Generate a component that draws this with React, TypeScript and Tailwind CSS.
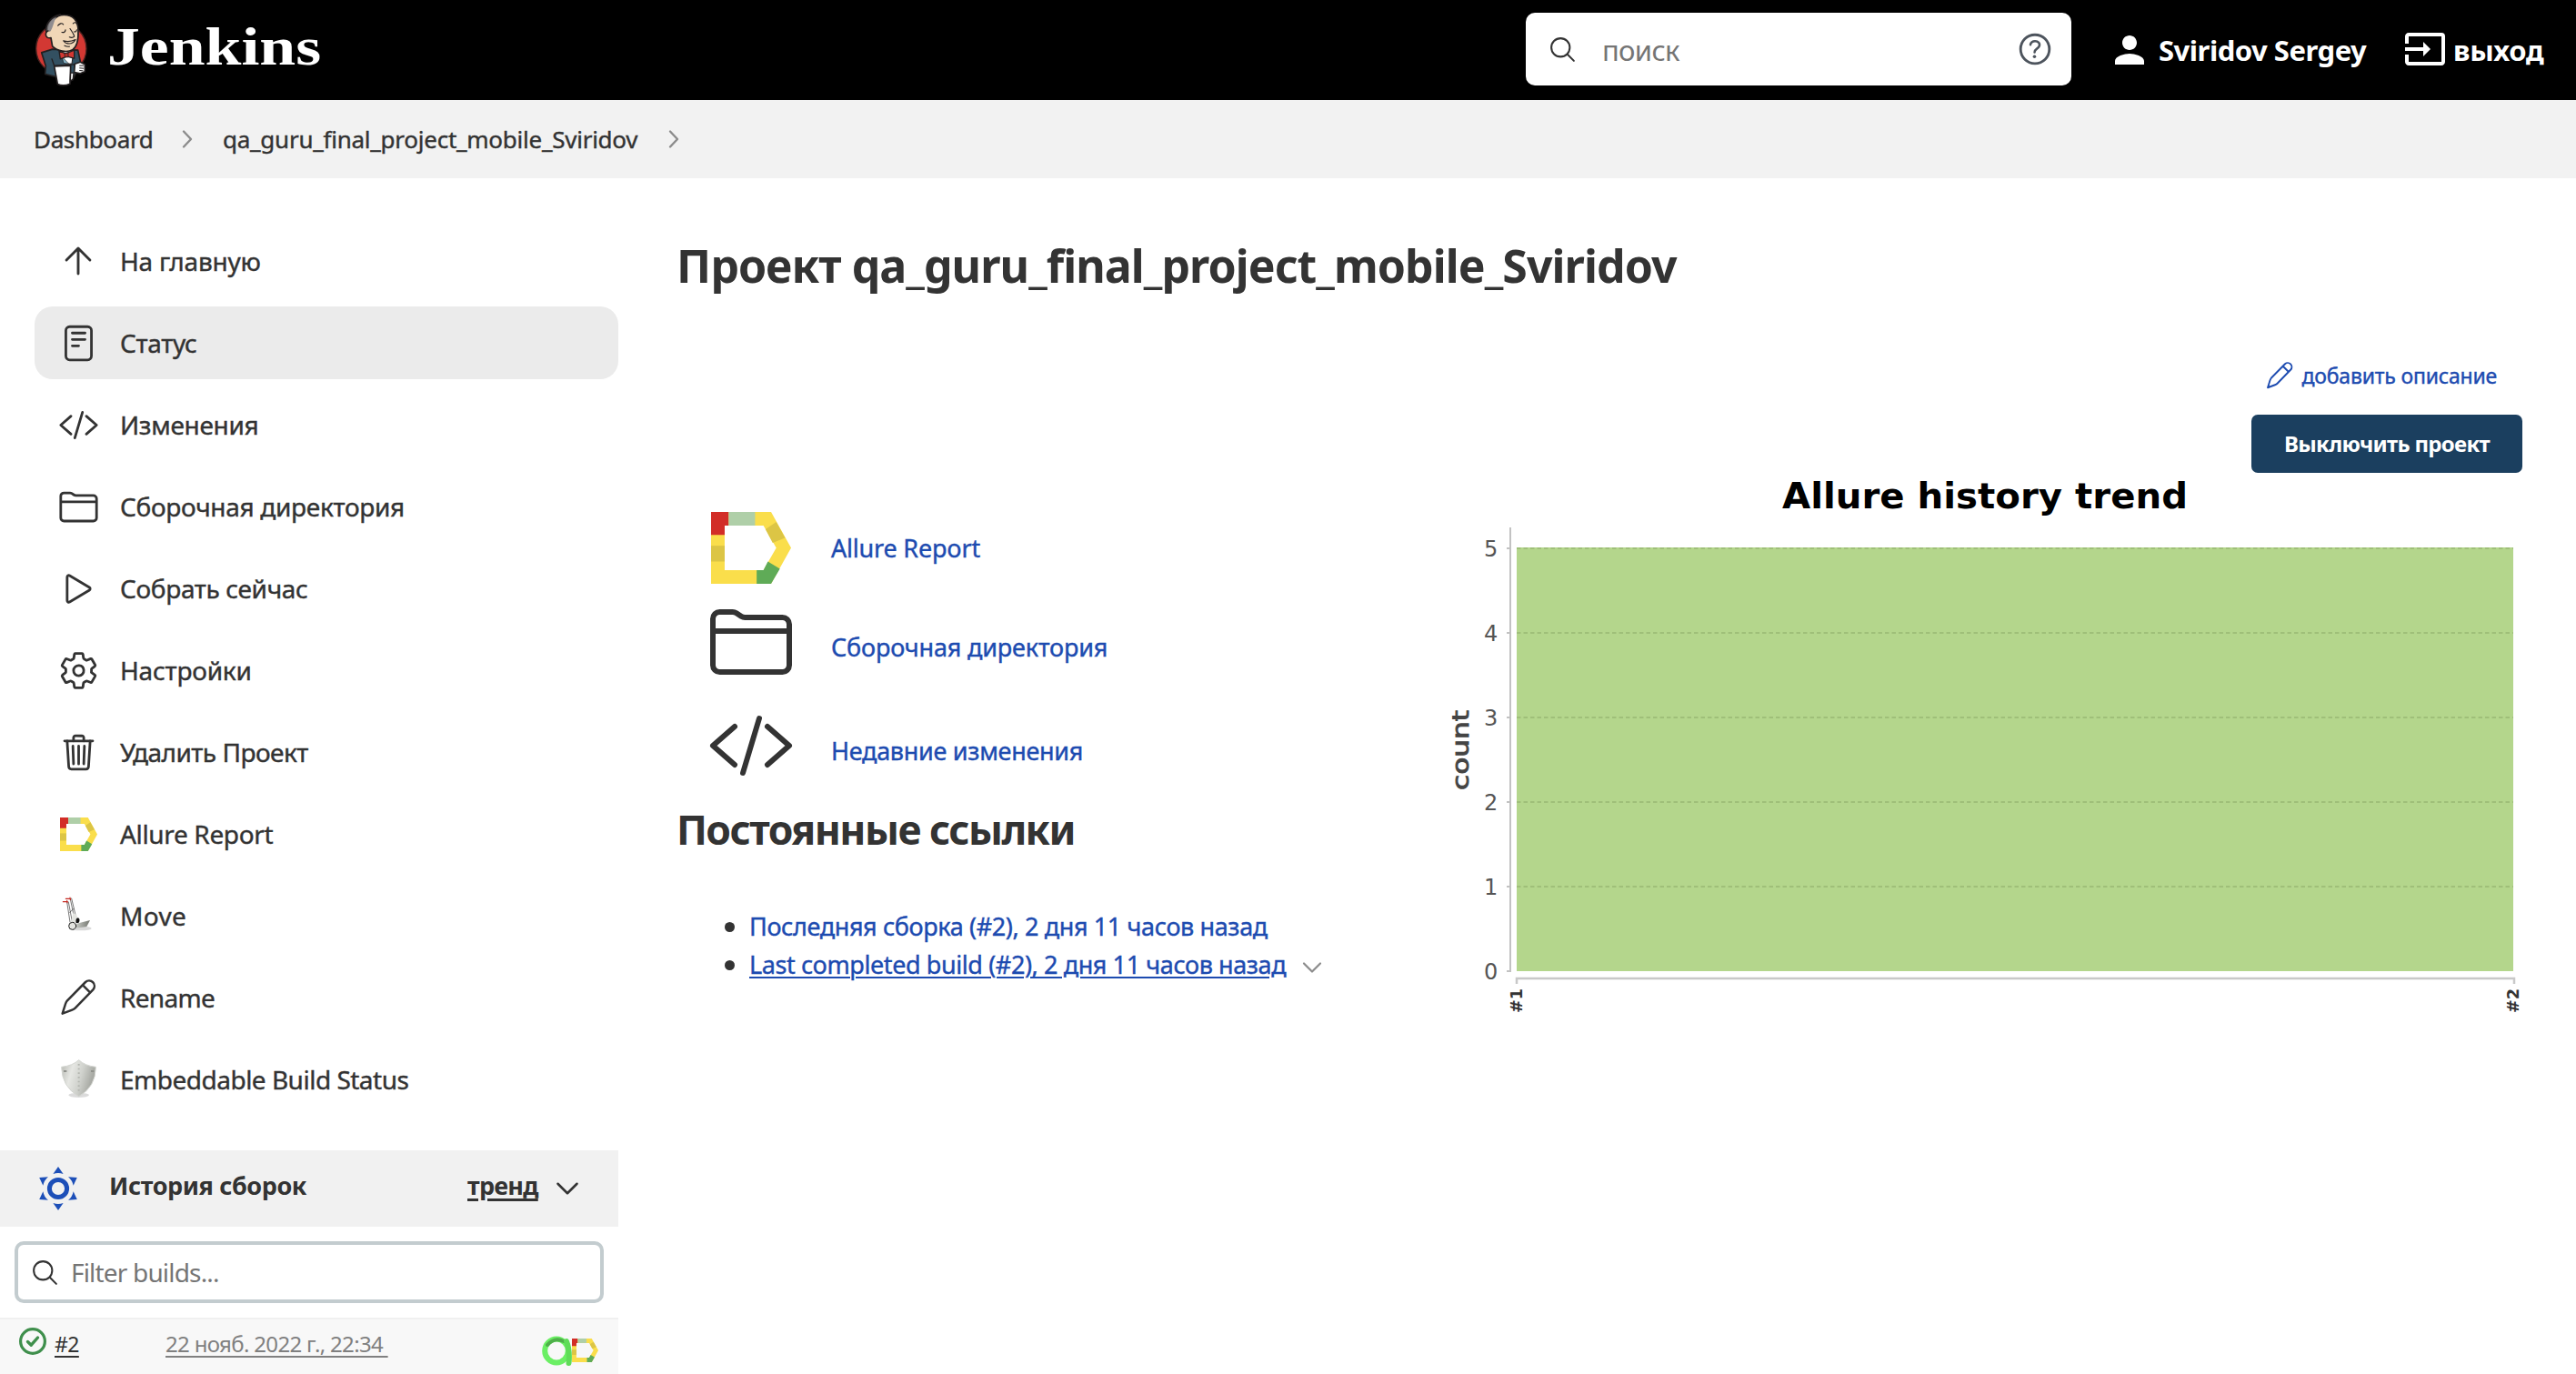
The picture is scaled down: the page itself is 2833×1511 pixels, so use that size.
import React from "react";
import {
  IoCodeSlashOutline,
  IoFolderOutline,
  IoHelpCircleOutline,
  IoPlayOutline,
  IoReaderOutline,
  IoSearchOutline,
  IoSettingsOutline,
  IoTrashOutline,
} from "react-icons/io5";
import { MdInput, MdPerson } from "react-icons/md";

type SvgProps = { className?: string };

function Butler({ className }: SvgProps) {
  return (
    <svg viewBox="50 40 180 245" className={className} fill="none" stroke="#231f20" strokeLinejoin="round" strokeLinecap="round">
      <ellipse cx="141" cy="158" rx="83" ry="84" fill="#d33833" strokeWidth="4" stroke="#4a2320" />
      <path d="M76 171 L112 160 L196 163 L205 205 L190 238 L178 262 L120 250 L88 242 L90 215 Z" fill="#335061" strokeWidth="5" />
      <path d="M136 165 L182 163 L176 208 L156 208 Z" fill="#fff" strokeWidth="3" />
      <path d="M143 184 L166 208 L150 206 Z" fill="#81b0c4" strokeWidth="2" />
      <path d="M92 108 C86 78 106 52 138 46 L118 96 Z" fill="#6d6b6d" strokeWidth="5" />
      <path d="M112 150 L107 122 C86 128 84 98 104 98 C106 66 124 47 150 47 C180 47 196 66 197 98 C198 126 196 150 178 162 C160 172 128 166 112 150 Z" fill="#f0d6b7" strokeWidth="5" />
      <path d="M106 100 C116 84 116 66 126 54 C108 60 97 78 98 98 Z" fill="#8f8c8f" stroke="none" />
      <path d="M130 82 Q140 70 148 78 M180 75 Q188 68 192 76 M143 104 Q154 106 155 96 M184 102 Q190 104 192 96 M170 92 Q184 112 184 118 Q178 124 168 120 M148 132 Q168 138 188 128 Q180 144 162 141 Q154 140 150 134 M152 148 Q160 152 168 151" strokeWidth="3.5" />
      <path d="M134 166 L156 174 L184 163 L184 190 L160 184 L138 192 Z" fill="#d33833" strokeWidth="4" />
      <path d="M153 173 L164 172 L164 186 L154 186 Z" fill="#b52b27" strokeWidth="2.5" />
      <path d="M118 216 L172 214 L170 274 Q148 284 129 275 Z" fill="#fff" strokeWidth="5" />
      <path d="M172 238 L182 238 L180 258 L171 266 Z" fill="#fff" strokeWidth="4" />
      <path d="M110 192 L118 214 L186 210" strokeWidth="4" />
      <path d="M186 208 L204 202 L219 210 L219 234 L204 240 L184 236 Z" fill="#fff" strokeWidth="5" />
      <path d="M202 214 L214 214 M202 222 L214 223 M202 230 L212 231" strokeWidth="3" />
    </svg>
  );
}

function ArrowUp() {
  return (
    <svg viewBox="0 0 512 512" className="size-[46px]" fill="none" stroke="currentColor" strokeWidth="32" strokeLinecap="round" strokeLinejoin="round">
      <path d="M112 244l144-144 144 144M256 120v292" />
    </svg>
  );
}

function Pencil({ className }: SvgProps) {
  return (
    <svg viewBox="36 309 144 144" className={className} fill="none" stroke="currentColor" strokeWidth="7.5" strokeLinecap="round" strokeLinejoin="round">
      <path d="M56 434 L66 402 Q68 396 72 391 L132 330 A17.7 17.7 0 0 1 157 355 L98 416 Q94 420 88 422 Z M124 341 L147 364" />
    </svg>
  );
}

function AllureLogo({ className }: SvgProps) {
  return (
    <svg viewBox="0 0 100 100" preserveAspectRatio="none" className={className}>
      <path d="M0 0H75L100 50L75 100H0Z M17 19V81H65.5L81.5 50L65.5 19Z" fillRule="evenodd" fill="#fade4b" />
      <path d="M0 0H22V19H17V32H0Z" fill="#d22d27" />
      <path d="M22 0H55V19H22Z" fill="#afcfa8" />
      <path d="M0 47H17V69H0Z" fill="#dcc545" />
      <path d="M81.5 14L92.5 36L77 43L68 24Z" fill="#dcc545" />
      <path d="M57 81H65.5L71 69L86 79L75 100H57Z" fill="#5fab57" />
    </svg>
  );
}

function HandTruck() {
  return (
    <svg viewBox="36 39 144 144" className="size-12" fill="none" strokeLinecap="round" strokeLinejoin="round">
      <defs>
        <linearGradient id="truckPlate" x1="0" y1="0" x2="1" y2="0">
          <stop offset="0" stopColor="#c9cbc6" />
          <stop offset="1" stopColor="#73766f" />
        </linearGradient>
      </defs>
      <ellipse cx="116" cy="153" rx="36" ry="7" fill="#000" opacity=".15" />
      <path d="M82 56 L92 104 M86 54 L99 108 M71 66 L81 132 M76 66 L88 130 M80 100 L93 88" stroke="#333" strokeWidth="2" />
      <path d="M92 100 L104 110 L108 136 L84 132 Z" fill="#e4e5e1" />
      <path d="M101 136 Q98 118 108 118 Q116 124 110 134 Z" fill="#111" />
      <path d="M100 138 L147 126 L136 147 L100 152 Z" fill="url(#truckPlate)" />
      <path d="M67 55 H83 M58 65 H73" stroke="#c42a22" strokeWidth="3.5" />
      <path d="M81 51 L82 59 M71 61 L72 69" stroke="#c42a22" strokeWidth="3" />
      <circle cx="89" cy="145" r="12" fill="#e4e4e0" stroke="#1d1d1d" strokeWidth="3" />
    </svg>
  );
}

function Shield() {
  return (
    <svg viewBox="36 579 144 144" className="size-12" fill="none">
      <defs>
        <linearGradient id="shieldFace" x1="0" y1="0" x2="1" y2="0.3">
          <stop offset="0" stopColor="#b4b6b0" />
          <stop offset=".35" stopColor="#e6e7e3" />
          <stop offset=".65" stopColor="#cfd1cc" />
          <stop offset="1" stopColor="#a3a59f" />
        </linearGradient>
      </defs>
      <ellipse cx="110" cy="703" rx="34" ry="8" fill="#000" opacity=".14" />
      <path d="M110 587 Q130 606 166 610 Q166 676 110 707 Q54 676 53 610 Q90 606 110 587 Z" fill="url(#shieldFace)" stroke="#d3d5d0" strokeWidth="3" />
      <path d="M110 600 V694" stroke="#b4b6b0" strokeWidth="6" strokeDasharray="5 9" />
      <path d="M60 624 H70 M150 624 H160" stroke="#8f918b" strokeWidth="6" />
    </svg>
  );
}

function Chevron({ className, d, w = 2.5 }: SvgProps & { d: string; w?: number }) {
  return (
    <svg viewBox="0 0 24 24" className={className} fill="none" stroke="currentColor" strokeWidth={w} strokeLinecap="round" strokeLinejoin="round">
      <path d={d} />
    </svg>
  );
}

const RIGHT = "M8 3.5 L16 12 L8 20.5";
const DOWN = "M3 7.5 L12 16.5 L21 7.5";

const menu: { label: string; icon: React.ReactNode; spacing: string; active?: boolean }[] = [
  { label: "На главную", icon: <ArrowUp />, spacing: "tracking-[-0.2px]" },
  { label: "Статус", icon: <IoReaderOutline className="size-[45px]" />, spacing: "tracking-[-0.33px]", active: true },
  { label: "Изменения", icon: <IoCodeSlashOutline className="size-[45px]" />, spacing: "tracking-[-0.3px]" },
  { label: "Сборочная директория", icon: <IoFolderOutline className="size-[45px]" />, spacing: "tracking-[-0.3px]" },
  { label: "Собрать сейчас", icon: <IoPlayOutline className="size-[45px]" />, spacing: "tracking-[-0.35px]" },
  { label: "Настройки", icon: <IoSettingsOutline className="size-[45px]" />, spacing: "tracking-[-0.2px]" },
  { label: "Удалить Проект", icon: <IoTrashOutline className="size-[45px]" />, spacing: "tracking-[-0.5px]" },
  { label: "Allure Report", icon: <AllureLogo className="w-[41px] h-[37px]" />, spacing: "tracking-[-0.34px]" },
  { label: "Move", icon: <HandTruck />, spacing: "tracking-[0.3px]" },
  { label: "Rename", icon: <Pencil className="size-12" />, spacing: "tracking-[-0.7px]" },
  { label: "Embeddable Build Status", icon: <Shield />, spacing: "tracking-[-0.5px]" },
];

function Header() {
  return (
    <header className="flex h-[110px] items-center bg-black text-white">
      <Butler className="ml-[36.7px] h-[82px] w-[60px]" />
      <span className="mb-[8px] ml-[21px] origin-left scale-x-[1.195] font-['Liberation_Serif',serif] text-[60px] font-bold leading-none">
        Jenkins
      </span>
      <div className="mb-[2px] ml-auto flex h-20 w-[600px] items-center rounded-[10px] bg-white pl-[24px] pr-[17px] text-[#333]">
        <IoSearchOutline className="size-[33px]" />
        <span className="ml-[27px] mt-[3px] text-[31px] tracking-[-0.68px] text-[#757575]">поиск</span>
        <IoHelpCircleOutline className="ml-auto size-[46px] text-[#4d545d]" />
      </div>
      <a className="ml-10 flex w-[325px] items-center gap-2 text-[31px] font-bold tracking-[-0.49px]">
        <MdPerson className="size-12" />
        Sviridov Sergey
      </a>
      <a className="flex w-[190px] items-center gap-[7px] text-[31px] font-bold tracking-[-0.29px]">
        <MdInput className="mb-0.5 size-12" />
        выход
      </a>
    </header>
  );
}

function Breadcrumbs() {
  return (
    <nav className="flex h-[86px] items-center bg-[#f2f2f2] pl-[37px] text-[26px] [-webkit-text-stroke:0.4px]">
      <span className="w-[157px] tracking-[-0.35px]">Dashboard</span>
      <Chevron className="size-6 text-[#8c8c8c]" d={RIGHT} w={2.4} />
      <span className="ml-[27px] w-[484px] tracking-[-0.25px]">qa_guru_final_project_mobile_Sviridov</span>
      <Chevron className="size-6 text-[#8c8c8c]" d={RIGHT} w={2.4} />
    </nav>
  );
}

function BuildHistory() {
  return (
    <section className="mt-[38px]">
      <div className="flex h-[84px] items-center bg-[#f1f1f1] pl-[38px] text-[27px] font-bold">
        <svg viewBox="-26 -26 52 52" className="size-[52px]" fill="#1d4fb8">
          <circle r="9.6" fill="none" stroke="#1d4fb8" strokeWidth="5" />
          {[0, 60, 120, 180, 240, 300].map((a) => (
            <path key={a} d="M0 -24 L5.6 -16 Q0 -18 -5.6 -16 Z" transform={`rotate(${a})`} />
          ))}
        </svg>
        <span className="mb-[5px] ml-[30px] w-[394px] tracking-[-0.4px]">История сборок</span>
        <span className="mb-[5px] tracking-[-0.75px] underline decoration-[2.5px] underline-offset-[4px]">тренд</span>
        <Chevron className="ml-[18px] size-7" d={DOWN} w={2.2} />
      </div>
      <div className="mx-4 mt-4 flex h-[68px] items-center rounded-[10px] border-4 border-[#c3cccf] pl-[13px]">
        <IoSearchOutline className="size-[33px]" />
        <span className="ml-[12px] text-[28px] tracking-[-0.82px] text-[#757575]">Filter builds...</span>
      </div>
      <div className="mt-4 flex h-[62px] items-start border-t-2 border-[#f0f0f0] bg-[#f8f8f8] pl-[20px] text-[23px] leading-[36px]">
        <svg viewBox="0 0 32 32" className="mt-[8px] size-8" fill="none" stroke="#3f8f4c" strokeLinecap="round" strokeLinejoin="round">
          <circle cx="16" cy="16" r="13.4" strokeWidth="3.2" />
          <path d="M10.5 16.5 L14.3 20.2 L21.5 12" strokeWidth="3.4" />
        </svg>
        <a className="ml-[8px] mt-[9px] w-[122px] tracking-[-0.6px]">
          <span className="underline decoration-2 underline-offset-[4px]">#2</span>
        </a>
        <a className="mt-[9px] w-[414px] text-[24px] tracking-[-0.67px] text-[#808080]">
          <span className="underline decoration-2 underline-offset-[4px]">22 нояб. 2022 г., 22:34&nbsp;</span>
        </a>
        <svg viewBox="0 0 33 33" className="mt-[18px] h-[33px] w-[33px]" fill="none" strokeLinecap="round">
          <ellipse cx="16" cy="16.5" rx="12.8" ry="13" stroke="#6bef64" strokeWidth="6" />
          <path d="M6 10 Q14 1 24 6" stroke="#4faf4a" strokeWidth="4" />
          <path d="M27 6 Q31 16 29.5 30" stroke="#5fdc58" strokeWidth="6" />
        </svg>
        <AllureLogo className="mt-[21px] h-[26px] w-[29px]" />
      </div>
    </section>
  );
}

function Sidebar() {
  return (
    <aside className="w-[680px] shrink-0 pt-[51px]">
      <ul className="flex flex-col gap-[10px] pl-[38px]">
        {menu.map((m) => (
          <li
            key={m.label}
            className={`flex h-20 items-center rounded-[20px] pl-6 text-[28px] [-webkit-text-stroke:0.4px] ${m.active ? "bg-[#ebebeb]" : ""}`}
          >
            <span className="flex w-12 justify-center">{m.icon}</span>
            <span className={`ml-[22px] whitespace-nowrap ${m.spacing}`}>{m.label}</span>
          </li>
        ))}
      </ul>
      <BuildHistory />
    </aside>
  );
}

function Chart() {
  const ticks = [603, 696, 789, 882, 975, 1068];
  return (
    <svg viewBox="1590 520 1184 600" className="h-[600px] w-[1184px]" fontFamily="'DejaVu Sans', sans-serif">
      <text x="1960" y="559" fontSize="39" fontWeight="700" fill="#000" textLength="446" lengthAdjust="spacingAndGlyphs">
        Allure history trend
      </text>
      <path d="M1661 580V1069" stroke="#c2c2c2" strokeWidth="2" />
      <rect x="1668" y="602" width="1096" height="466" fill="#b4d68c" />
      {ticks.map((y, i) => (
        <g key={y}>
          <path d={`M1657 ${y}H1661`} stroke="#c2c2c2" strokeWidth="2" />
          {i < 5 && <path d={`M1668 ${y}H2764`} stroke="#9fbf79" strokeWidth="2" strokeDasharray="4.5 3" />}
          <text x="1632" y={y + 8.5} fontSize="24" fill="#555">
            {5 - i}
          </text>
        </g>
      ))}
      <path d="M1668 1082V1076H2765V1082" fill="none" stroke="#c8c8c8" strokeWidth="2.5" />
      <text transform="translate(1615 869) rotate(-90)" fontSize="25" fill="#444" stroke="#444" strokeWidth=".9" textLength="88" lengthAdjust="spacingAndGlyphs">
        count
      </text>
      <text transform="translate(1674 1114) rotate(-90)" fontSize="17" fontWeight="700" fill="#333" textLength="27" lengthAdjust="spacingAndGlyphs">
        #1
      </text>
      <text transform="translate(2770 1114) rotate(-90)" fontSize="17" fontWeight="700" fill="#333" textLength="27" lengthAdjust="spacingAndGlyphs">
        #2
      </text>
    </svg>
  );
}

function Main() {
  return (
    <main className="flex-1 pl-[62px] pr-[59px]">
      <h1 className="ml-[2px] mt-[61px] h-[70px] whitespace-nowrap text-[50px] font-bold leading-[70px] tracking-[-0.93px]">
        Проект qa_guru_final_project_mobile_Sviridov
      </h1>
      <div className="flex justify-between pt-[65px]">
        <div className="pt-[170px] text-[27px]">
          <div className="flex h-20 items-center pl-[40px] text-[#1d4bb0] [-webkit-text-stroke:0.4px]">
            <AllureLogo className="h-[79px] w-[88px]" />
            <a className="ml-[44px] mt-[2px] tracking-[-0.2px]">Allure Report</a>
          </div>
          <div className="mt-[13px] flex h-[102px] items-center pl-[36px] text-[#1d4bb0] [-webkit-text-stroke:0.4px]">
            <IoFolderOutline className="size-24 text-[#333]" />
            <a className="ml-[40px] mt-[12px] tracking-[-0.17px]">Сборочная директория</a>
          </div>
          <div className="mt-[12px] flex h-[102px] items-center pl-[36px] text-[#1d4bb0] [-webkit-text-stroke:0.4px]">
            <IoCodeSlashOutline className="size-24 text-[#333]" />
            <a className="ml-[40px] mt-[12px] tracking-[-0.3px]">Недавние изменения</a>
          </div>
          <h2 className="ml-[2px] mt-[11px] h-[60px] text-[44.5px] font-bold leading-[60px] tracking-[-1.55px]">Постоянные ссылки</h2>
          <ul className="mt-[56px] pl-[55px] leading-[42px] [-webkit-text-stroke:0.4px]">
            <li className="flex items-center">
              <span className="size-[11px] rounded-full bg-[#333]" />
              <a className="ml-[16px] whitespace-nowrap tracking-[-0.38px] text-[#1d4bb0]">
                Последняя сборка (#2), 2 дня 11 часов назад
              </a>
            </li>
            <li className="flex items-center">
              <span className="size-[11px] rounded-full bg-[#333]" />
              <a className="ml-[16px] whitespace-nowrap tracking-[-0.41px] text-[#1d4bb0] underline decoration-2 underline-offset-[3px]">
                Last completed build (#2), 2 дня 11 часов назад
              </a>
              <Chevron className="ml-[17px] mt-[6px] size-6 text-[#8c8c8c]" d={DOWN} w={2.2} />
            </li>
          </ul>
        </div>
        <div className="flex w-[1184px] flex-col items-end">
          <a className="mr-[28px] flex h-[42px] items-center text-[23px] tracking-[-0.19px] text-[#1d4bb0] [-webkit-text-stroke:0.4px]">
            <Pencil className="mr-[7px] size-9" />
            добавить описание
          </a>
          <button className="mt-[22px] h-16 w-[298px] rounded-[7px] bg-[#1b3f5f] text-[24px] font-bold tracking-[-0.7px] text-white">
            Выключить проект
          </button>
          <Chart />
        </div>
      </div>
    </main>
  );
}

export default function App() {
  return (
    <div className="h-[1511px] w-[2833px] overflow-hidden bg-white font-['Noto_Sans','Open_Sans',sans-serif] text-[#333]">
      <Header />
      <Breadcrumbs />
      <div className="flex">
        <Sidebar />
        <Main />
      </div>
    </div>
  );
}
